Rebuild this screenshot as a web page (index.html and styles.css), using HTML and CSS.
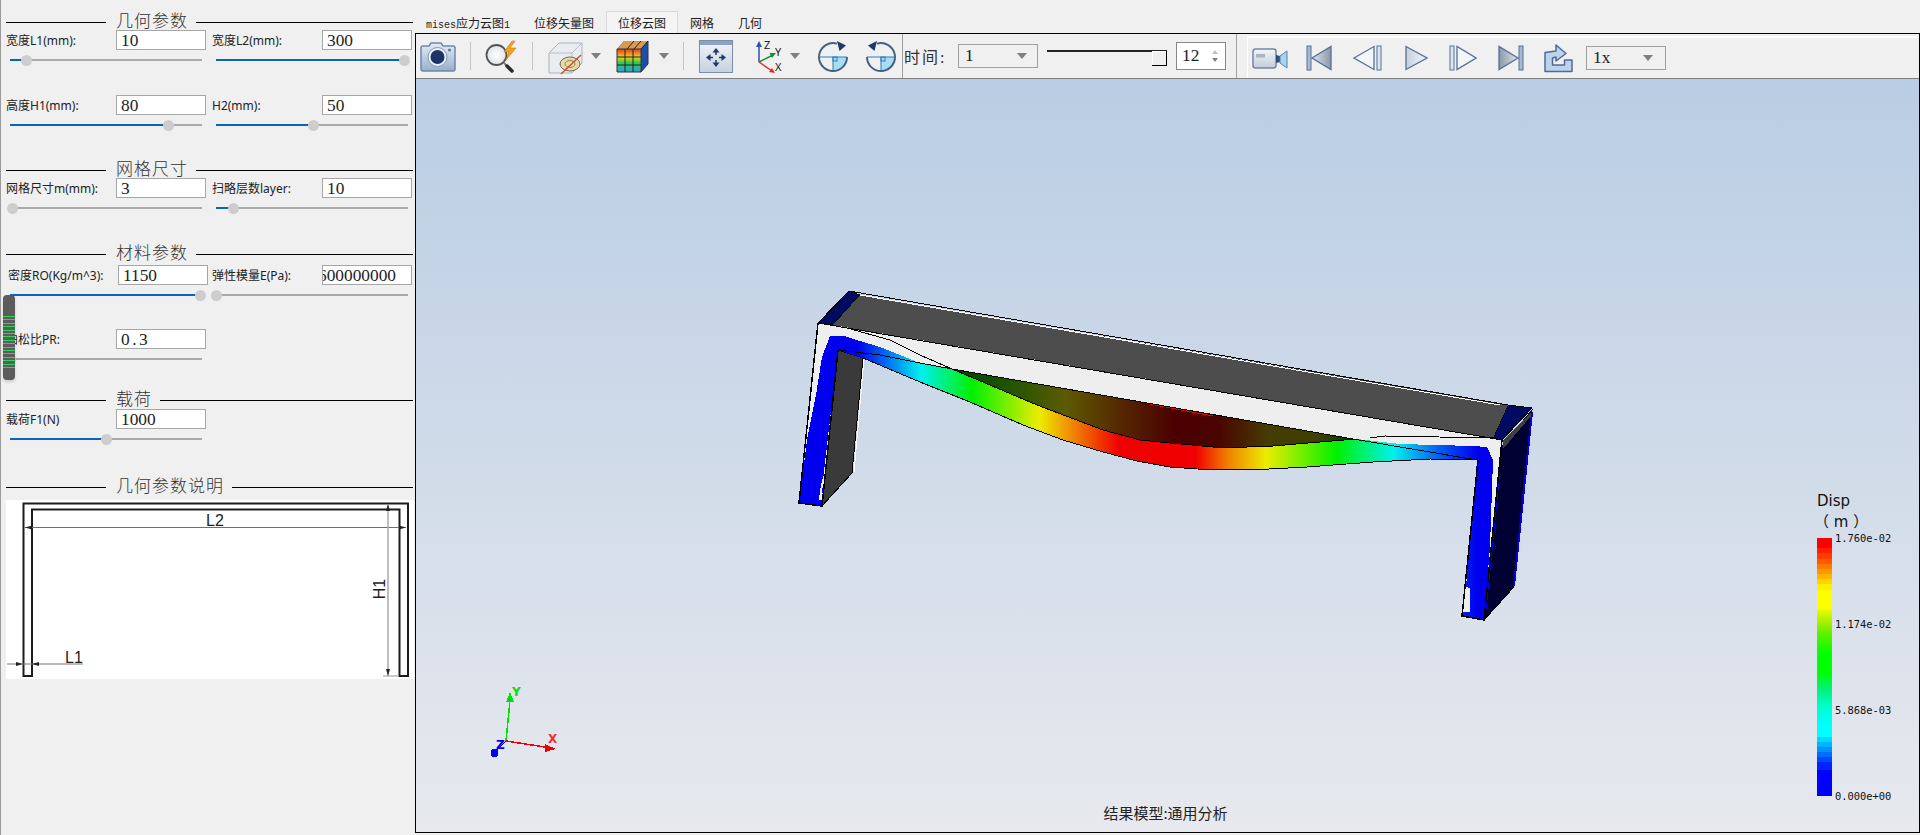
FILE: index.html
```html
<!DOCTYPE html>
<html lang="zh">
<head>
<meta charset="utf-8">
<title>位移云图</title>
<link rel="stylesheet" href="styles.css">
</head>
<body>
<div class="app">
  <aside class="panel">
    <div class="grip"></div>

    <div class="heading"><span class="rule-a"></span><span class="title">几何参数</span><span class="rule-b"></span></div>
    <div class="form gap-25">
      <div class="field"><div class="row"><span class="lbl">宽度L1(mm):</span><div class="val">10</div></div><div class="slider"><div class="fill" style="width:8.8%"></div></div></div>
      <div class="field"><div class="row"><span class="lbl">宽度L2(mm):</span><div class="val">300</div></div><div class="slider"><div class="fill" style="width:98.4%"></div></div></div>
      <div class="field"><div class="row"><span class="lbl">高度H1(mm):</span><div class="val">80</div></div><div class="slider"><div class="fill" style="width:82.5%"></div></div></div>
      <div class="field"><div class="row"><span class="lbl">H2(mm):</span><div class="val">50</div></div><div class="slider"><div class="fill" style="width:51%"></div></div></div>
    </div>

    <div class="heading sec-mesh"><span class="rule-a"></span><span class="title">网格尺寸</span><span class="rule-b"></span></div>
    <div class="form">
      <div class="field"><div class="row"><span class="lbl">网格尺寸m(mm):</span><div class="val">3</div></div><div class="slider"><div class="fill" style="width:1.5%"></div></div></div>
      <div class="field"><div class="row"><span class="lbl">扫略层数layer:</span><div class="val">10</div></div><div class="slider"><div class="fill" style="width:9%"></div></div></div>
    </div>

    <div class="heading sec-mat"><span class="rule-a"></span><span class="title">材料参数</span><span class="rule-b"></span></div>
    <div class="form gap-24">
      <div class="field nudged"><div class="row"><span class="lbl">密度RO(Kg/m^3):</span><div class="val">1150</div></div><div class="slider"><div class="fill" style="width:99%"></div></div></div>
      <div class="field"><div class="row"><span class="lbl">弹性模量E(Pa):</span><div class="val clipped">600000000</div></div><div class="slider"><div class="fill" style="width:0.5%"></div></div></div>
      <div class="field"><div class="row"><span class="lbl">泊松比PR:</span><div class="val spaced">0.3</div></div><div class="slider"><div class="fill" style="width:0"></div></div></div>
    </div>

    <div class="heading sec-load"><span class="rule-a"></span><span class="title">载荷</span><span class="rule-b"></span></div>
    <div class="form">
      <div class="field"><div class="row"><span class="lbl">载荷F1(N)</span><div class="val">1000</div></div><div class="slider"><div class="fill" style="width:50%"></div></div></div>
    </div>

    <div class="heading sec-note"><span class="rule-a"></span><span class="title">几何参数说明</span><span class="rule-b"></span></div>
    <svg class="sketch" viewBox="6 500 408 179" width="408" height="179">
      <rect x="6" y="500" width="408" height="179" fill="#fff"/>
      <path d="M23.5 676V503.5H408V676H399.5V509.5H32V676Z" fill="none" stroke="#1c1c1c" stroke-width="2"/>
      <path d="M25 527.5H406" stroke="#6e6e6e" stroke-width="1"/>
      <path d="M25 527.5l7-2v4zM406 527.5l-7-2v4z" fill="#222"/>
      <path d="M388 504V676" stroke="#a8a8a8" stroke-width="1.5"/>
      <path d="M388 504l-2 7h4zM388 676l-2-7h4z" fill="#222"/>
      <path d="M383 676H399" stroke="#999" stroke-width="1"/>
      <path d="M7 664H83" stroke="#777" stroke-width="1"/>
      <path d="M23 664l-7-2v4zM32 664l7-2v4z" fill="#222"/>
      <text x="215" y="526" class="dim" text-anchor="middle">L2</text>
      <text x="65" y="663" class="dim">L1</text>
      <text class="dim" text-anchor="middle" transform="translate(385 589) rotate(-90)">H1</text>
    </svg>
  </aside>

  <main class="main">
    <nav class="tabs">
      <span class="tab first"><span class="mono">mises</span>应力云图<span class="mono">1</span></span>
      <span class="tab">位移矢量图</span>
      <span class="tab active">位移云图</span>
      <span class="tab">网格</span>
      <span class="tab">几何</span>
    </nav>

    <section class="frame">
      <div class="toolbar">
        <svg class="icon m-4" width="36" height="36" viewBox="0 0 36 36">
          <defs><linearGradient id="cam" x1="0" y1="0" x2="0" y2="1"><stop offset="0" stop-color="#e4ecf5"/><stop offset="1" stop-color="#97afcd"/></linearGradient></defs>
          <path d="M9 8l2-3h10l2 3h10a2 2 0 0 1 2 2v21a2 2 0 0 1-2 2H3a2 2 0 0 1-2-2V10a2 2 0 0 1 2-2z" fill="url(#cam)" stroke="#6f88a8" stroke-width="1.5"/>
          <circle cx="17.5" cy="19" r="9.5" fill="#eaf0f7" stroke="#7f97b6"/>
          <circle cx="17.5" cy="19" r="7" fill="#1c3468"/>
          <circle cx="29.5" cy="12" r="1.5" fill="#5d7597"/>
        </svg>
        <span class="sep-short m-14"></span>
        <svg class="icon m-12" width="38" height="36" viewBox="0 0 38 36">
          <defs><radialGradient id="lens"><stop offset="0" stop-color="#fff"/><stop offset="1" stop-color="#dfe4ea"/></radialGradient></defs>
          <path d="M21 25l3 3" stroke="#777" stroke-width="2"/>
          <path d="M24 28l5 5" stroke="#2b2b2b" stroke-width="3.500" stroke-linecap="round"/>
          <circle cx="13.500" cy="17" r="10" fill="url(#lens)" stroke="#555" stroke-width="1.800"/>
          <path d="M29 3l-8 11h5l-3 8 10-12h-6l5-7z" fill="#f2a21b" stroke="#c97b10" stroke-width=".6"/>
        </svg>
        <span class="sep-short m-11"></span>
        <svg class="icon m-13" width="38" height="36" viewBox="0 0 38 36">
          <path d="M3 15L13 5h23v20L26 35H3z" fill="#e9edf1" stroke="#a9b2bd"/>
          <path d="M3 15h23v20M26 15L36 5" fill="none" stroke="#b8c0ca"/>
          <ellipse cx="24" cy="26" rx="10" ry="7" fill="#e8d9a4" stroke="#6f6a55"/>
          <ellipse cx="24" cy="26" rx="5" ry="3.5" fill="none" stroke="#8f8360"/>
          <path d="M15 36L35 17" stroke="#d4502a" stroke-width="1.5"/>
        </svg>
        <span class="caret m-6"></span>
        <svg class="icon m-13" width="36" height="36" viewBox="0 0 36 36">
          <defs>
            <linearGradient id="rb" x1="0" y1="0" x2="0" y2="1"><stop offset="0" stop-color="#e23a1f"/><stop offset=".35" stop-color="#f0d020"/><stop offset=".6" stop-color="#34c84a"/><stop offset="1" stop-color="#2aa0e8"/></linearGradient>
          </defs>
          <path d="M3 11L10 3h24v23l-7 8H3z" fill="#1d4fa8"/>
          <path d="M3 11L10 3h24l-7 8z" fill="#d99a50"/>
          <rect x="3" y="11" width="24" height="23" fill="url(#rb)"/>
          <path d="M11 11v23M19 11v23M3 19h24M3 27h24M27 11L34 3M13 11l7-8M20 11l7-8" stroke="#222" stroke-width="1" fill="none"/>
          <path d="M3 11h24v23H3zM27 34l7-8V3" fill="none" stroke="#333"/>
        </svg>
        <span class="caret m-8"></span>
        <span class="sep-short m-14"></span>
        <svg class="icon m-14" width="36" height="36" viewBox="0 0 36 36">
          <defs><linearGradient id="win" x1="0" y1="0" x2="0" y2="1"><stop offset="0" stop-color="#f2f5f9"/><stop offset="1" stop-color="#c6d1df"/></linearGradient></defs>
          <rect x="1.5" y="2.5" width="33" height="32" fill="url(#win)" stroke="#7b8da8"/>
          <rect x="2" y="3" width="32" height="4" fill="#8ea3bf"/>
          <g fill="#1f3a68">
            <path d="M18 10l-3.500 4.500h7zM18 29l-3.500-4.500h7zM8 19.500l4.500-3.500v7zM28 19.500l-4.500-3.500v7z"/>
          </g>
          <path d="M18 14v3M18 22v3M12 19.500h3M21 19.500h3" stroke="#1f3a68" stroke-width="1.500"/>
        </svg>
        <svg class="icon m-16" width="36" height="36" viewBox="0 0 36 36">
          <path d="M9 24V7" stroke="#2a55a8" stroke-width="1.500"/><path d="M9 3l-3 6h6z" fill="#2a55a8"/>
          <path d="M9 24l14-7" stroke="#178a3c" stroke-width="1.500"/><path d="M26 15l-6.500 0 2.500 5z" fill="#178a3c"/>
          <path d="M9 24l13 9" stroke="#e02a2a" stroke-width="1.500"/><path d="M25 35l-6-1 3-4z" fill="#e02a2a"/>
          <text x="14" y="11" class="axis">Z</text><text x="25" y="18" class="axis">Y</text><text x="25" y="33" class="axis">X</text>
        </svg>
        <span class="caret m-4"></span>
        <svg class="icon m-15" width="36" height="36" viewBox="0 0 36 36">
          <path d="M18 19h14A14 14 0 0 1 18 33z" fill="#a9dcf5"/>
          <path d="M22 5.600A14 14 0 1 0 32 19" fill="none" stroke="#46607f" stroke-width="2"/>
          <path d="M4 19h28M18 19v14" stroke="#2f7fb8" stroke-width="1"/>
          <path d="M22 3l9 4.500-6.500 5.500z" fill="#1f3a68"/>
          <rect x="18" y="19" width="4" height="4" fill="none" stroke="#2f7fb8"/>
        </svg>
        <svg class="icon m-12" width="36" height="36" viewBox="0 0 36 36">
          <path d="M18 19v14A14 14 0 0 0 32 19z" fill="#a9dcf5"/>
          <path d="M14 5.600A14 14 0 1 1 4 19" fill="none" stroke="#46607f" stroke-width="2"/>
          <path d="M4 19h28M18 19v14" stroke="#2f7fb8" stroke-width="1"/>
          <path d="M14 3L5 7.500l6.500 5.500z" fill="#1f3a68"/>
          <rect x="18" y="19" width="4" height="4" fill="none" stroke="#2f7fb8"/>
        </svg>
        <span class="sep-full m-3"></span>
        <span class="time-lbl">时间:</span>
        <div class="combo combo-time"><span>1</span><span class="caret"></span></div>
        <div class="time-slider"><span class="time-handle"></span></div>
        <div class="spin"><span>12</span><span class="spin-btns"><i class="up"></i><i class="down"></i></span></div>
        <span class="sep-full m-10"></span>
        <div class="player">
          <svg width="36" height="24" viewBox="0 0 36 24">
            <defs><linearGradient id="vid" x1="0" y1="0" x2="0" y2="1"><stop offset="0" stop-color="#f4f6f9"/><stop offset="1" stop-color="#c3ccd8"/></linearGradient></defs>
            <rect x="1" y="3" width="23" height="19" rx="2.500" fill="url(#vid)" stroke="#6f88a8" stroke-width="1.500"/>
            <rect x="4" y="8" width="9" height="3.500" fill="#a9b4c2"/>
            <path d="M24 9l4 1v6l-4 1z" fill="#2f4e7c"/>
            <path d="M28 10l7-5v17l-7-5z" fill="#a7d4ee" stroke="#5f7fa6"/>
          </svg>
          <svg class="m-18" width="26" height="26" viewBox="0 0 26 26">
            <defs><linearGradient id="dk" x1="0" y1="0" x2="1" y2="0"><stop offset="0" stop-color="#dfe4ea"/><stop offset="1" stop-color="#8b97a8"/></linearGradient></defs>
            <rect x="1" y="1" width="4" height="24" fill="#a8bad0" stroke="#54709a"/>
            <path d="M25 1.500V24.500L6 13z" fill="url(#dk)" stroke="#54709a" stroke-width="1.300"/>
          </svg>
          <svg class="m-21" width="29" height="26" viewBox="0 0 29 26">
            <path d="M1 13L21 1.500V24.500z" fill="#f3f5f8" stroke="#54709a" stroke-width="1.300"/>
            <rect x="24" y="1" width="4" height="24" fill="#dde5ef" stroke="#54709a"/>
          </svg>
          <svg class="m-22" width="24" height="26" viewBox="0 0 24 26">
            <defs><linearGradient id="lt" x1="0" y1="0" x2="1" y2="0"><stop offset="0" stop-color="#c4d0df"/><stop offset="1" stop-color="#f5f7fa"/></linearGradient></defs>
            <path d="M2 1.500V24.500L23 13z" fill="url(#lt)" stroke="#54709a" stroke-width="1.300"/>
          </svg>
          <svg class="m-21" width="28" height="26" viewBox="0 0 28 26">
            <rect x="1" y="1" width="4" height="24" fill="#dde5ef" stroke="#54709a"/>
            <path d="M8 1.500V24.500L27 13z" fill="#f3f5f8" stroke="#54709a" stroke-width="1.300"/>
          </svg>
          <svg class="m-21" width="26" height="26" viewBox="0 0 26 26">
            <defs><linearGradient id="dk2" x1="0" y1="0" x2="1" y2="0"><stop offset="0" stop-color="#8b97a8"/><stop offset="1" stop-color="#dfe4ea"/></linearGradient></defs>
            <path d="M1 1.500V24.500L20 13z" fill="url(#dk2)" stroke="#54709a" stroke-width="1.300"/>
            <rect x="21" y="1" width="4" height="24" fill="#a8bad0" stroke="#54709a"/>
          </svg>
          <svg class="m-20" width="29" height="29" viewBox="0 0 29 29">
            <path d="M1 8.500L12 7V1l10 8.500L12 17v-4l-3.500 1v7h12v-5H28v11.500H1z" fill="#bcd3ec" stroke="#4d6c96" stroke-width="1.500" stroke-linejoin="round"/>
          </svg>
          <div class="combo combo-speed"><span>1x</span><span class="caret"></span></div>
        </div>
      </div>

      <div class="viewport">
        <svg class="scene" viewBox="416 79 1503 753" preserveAspectRatio="none">
          <defs>
            <linearGradient id="disp" gradientUnits="userSpaceOnUse" x1="838" y1="0" x2="1477" y2="0">
              <stop offset="0" stop-color="#0000ee"/>
              <stop offset=".03" stop-color="#0000ee"/>
              <stop offset=".07" stop-color="#0060f0"/>
              <stop offset=".13" stop-color="#00f0f0"/>
              <stop offset=".21" stop-color="#00f000"/>
              <stop offset=".315" stop-color="#ecec00"/>
              <stop offset=".37" stop-color="#f08000"/>
              <stop offset=".44" stop-color="#f00000"/>
              <stop offset=".56" stop-color="#f00000"/>
              <stop offset=".61" stop-color="#f08000"/>
              <stop offset=".67" stop-color="#ecec00"/>
              <stop offset=".78" stop-color="#00f000"/>
              <stop offset=".87" stop-color="#00f0f0"/>
              <stop offset=".94" stop-color="#0060f0"/>
              <stop offset="1" stop-color="#0000ee"/>
            </linearGradient>
            <linearGradient id="under" gradientUnits="userSpaceOnUse" x1="952" y1="0" x2="1357" y2="0">
              <stop offset="0" stop-color="#003f00"/>
              <stop offset=".13" stop-color="#1c5400"/>
              <stop offset=".28" stop-color="#5c5a00"/>
              <stop offset=".42" stop-color="#552600"/>
              <stop offset=".55" stop-color="#4a0000"/>
              <stop offset=".66" stop-color="#4a0500"/>
              <stop offset=".78" stop-color="#453c00"/>
              <stop offset=".9" stop-color="#3e4000"/>
              <stop offset="1" stop-color="#003a00"/>
            </linearGradient>
          </defs>
          <g shape-rendering="crispEdges">
            <polygon points="838,350 863,358 852,473 822,506" fill="#3a3a3a" stroke="#000"/>
            <path d="M864 359L854 472" stroke="#fff"/>
            <polygon points="1502,446 1532,410 1513,588 1484,620" fill="#000033" stroke="#000"/>
            <path d="M1532 412L1514 586" stroke="#0000dd" stroke-width="2"/>
            <path d="M1500 470L1486 610" stroke="#0000dd"/>
            <polygon points="1493,438 1508,405 1532,408 1502,440" fill="#000a60" stroke="#000"/>
            <polygon points="1503,441 1531,412 1531,416 1503,449" fill="#404040"/>
            <polygon points="849,291 860,295 833,325 818,323" fill="#000a60" stroke="#000"/>
            <polygon points="860,295 1508,405 1493,438 833,325" fill="#4d4d4d"/>
            <path d="M849 291L1508 405" stroke="#000" fill="none"/>
            <path d="M860 295L1500 405" stroke="#fff" fill="none"/>

            <polygon points="818,323 1502,440 1478,460 1140,402 952,369 838,350 822,506 799,503" fill="#eeeeee"/>
            <polygon points="1502,440 1478,460 1462,616 1484,620" fill="#eeeeee"/>

            <polygon points="830,336 844,336 850,338 880,347 920,363 952,369 1037,405 1103,430 1140,440 1170,443 1213,447 1247,447 1273,446 1320,442 1357,439 1400,444 1473,446 1487,447 1493,460 1490,547 1484,620 1462,616 1466,587 1477,460 1430,459 1373,462 1307,467 1250,470 1197,469 1170,467 1137,461 1103,452 1063,440 1023,425 970,402 920,382 863,358 838,350 823,480 822,506 799,503 807,440 816,395 822,357" fill="url(#disp)"/>
            <polygon points="823,477 822,500 819,500 820,490" fill="#eeeeee"/>
            <polygon points="1466,587 1470,588 1470,612 1463,612" fill="#eeeeee"/>

            <polygon points="952,369 1170,407 1353,439 1320,442 1273,446 1247,447 1213,447 1170,443 1140,440 1103,430 1037,405" fill="url(#under)"/>
            <path d="M1150 404L1213 416" stroke="#f00000"/>

            <path d="M818 323L1502 440" stroke="#000"/>
            <path d="M952 369L1037 405L1103 430L1140 440L1170 443L1213 447L1247 447L1273 446L1320 442L1357 439" fill="none" stroke="#000"/>
            <path d="M952 369L1170 407L1353 439" fill="none" stroke="#000"/>
            <path d="M863 358L920 382L970 402L1023 425L1063 440L1103 452L1137 461L1170 467L1197 469L1250 470L1307 467L1373 462L1430 459L1477 460" fill="none" stroke="#000"/>
            <path d="M838 350L880 355L920 363L952 369" fill="none" stroke="#000"/>
            <path d="M847 328L890 340L920 355L952 369" fill="none" stroke="#000"/>
            <path d="M1353 439L1477 460" fill="none" stroke="#000"/>
            <path d="M1370 438L1385 436L1493 438" fill="none" stroke="#000"/>
            <path d="M838 350L822 506L799 503L818 323" fill="none" stroke="#000" stroke-width="1.500"/>
            <path d="M1478 460L1462 616L1484 620L1502 440" fill="none" stroke="#000" stroke-width="1.500"/>

            <path d="M506 741L510 700" stroke="#00e000" stroke-width="1.500" fill="none"/>
            <polygon points="510,692 506,702 514,702" fill="#00e000"/>
            <path d="M506 741L545 747" stroke="#f00000" stroke-width="1.500" fill="none"/>
            <polygon points="556,749 545,744 545,752" fill="#f00000"/>
            <path d="M506 741L494 753" stroke="#0000f0" stroke-width="1" fill="none"/>
            <circle cx="494.500" cy="753" r="4" fill="#0000f0"/>
          </g>
          <text x="512" y="696" class="t-y">Y</text>
          <text x="548" y="743" class="t-x">X</text>
          <text x="496" y="749" class="t-z">Z</text>
        </svg>

        <div class="legend">
          <div class="legend-title">Disp</div>
          <div class="legend-unit">（ m ）</div>
          <div class="legend-body">
            <div class="legend-bar"></div>
            <div class="legend-ticks"><span>1.760e-02</span><span>1.174e-02</span><span>5.868e-03</span><span>0.000e+00</span></div>
          </div>
        </div>
        <div class="status">结果模型:通用分析</div>
      </div>
    </section>
  </main>
</div>
</body>
</html>
```

FILE: styles.css
```css
* { box-sizing: border-box; }
html, body { margin: 0; height: 100%; overflow: hidden; }
body {
  background: #f0f0f0;
  color: #222;
  font-family: "Noto Sans", "Noto Sans CJK SC", sans-serif;
  font-size: 12px;
}
.app { display: flex; height: 835px; }

/* left panel */
.panel {
  position: relative;
  flex: none;
  width: 415px;
  padding: 14px 0 0 5px;
  border-left: 1px solid #9a9a9a;
}
.grip {
  position: absolute;
  left: 2px;
  top: 295px;
  width: 12px;
  height: 85px;
  border-radius: 4px;
  background:
    repeating-linear-gradient(180deg, #2fd45a 0 1px, #5c5c5c 1px 3.4px) 0 21px / 100% 54px no-repeat,
    #5c5c5c;
  box-shadow: 0 2px 3px rgba(0, 0, 0, .15);
  z-index: 2;
}
.heading { display: flex; align-items: center; height: 16px; }
.rule-a { flex: none; width: 100px; height: 1px; background: #000; }
.rule-b { flex: none; flex-grow: 1; height: 1px; background: #000; margin-right: 2px; }
.title {
  flex: none;
  margin: 0 8px 0 10px;
  font: 300 17px/16px "Liberation Serif", "Noto Sans CJK SC", serif;
  letter-spacing: 1px;
  color: #333;
}
.sec-mesh { margin-top: 27px; }
.sec-mat { margin-top: 28px; margin-bottom: 3px; }
.sec-load { margin-top: 23px; margin-bottom: 1px; }
.sec-note { margin-top: 30px; margin-bottom: 5px; }

.form { display: grid; grid-template-columns: 200px 200px; column-gap: 6px; }
.gap-25 { row-gap: 25px; }
.gap-24 { row-gap: 24px; }
.field { height: 40px; }
.row { display: flex; align-items: center; height: 20px; }
.nudged .row { padding-left: 2px; margin-right: -2px; }
.lbl { flex: 1; white-space: nowrap; font-size: 12px; color: #222; }
.val {
  flex: none;
  width: 90px;
  height: 20px;
  padding: 0 4px;
  overflow: hidden;
  white-space: nowrap;
  background: #fff;
  border: 1px solid #a6a6a6;
  font: 13pt/19px "Liberation Serif", "Noto Serif", serif;
  color: #222;
}
.clipped { text-indent: -9px; }
.spaced { letter-spacing: 2.5px; }

.slider { margin: 9px 4px 0; height: 2px; background: #aaa; }
.fill { position: relative; height: 2px; background: #0a64b8; }
.fill::after {
  content: "";
  position: absolute;
  right: -5.5px;
  top: -4.5px;
  width: 11px;
  height: 11px;
  border-radius: 50%;
  background: #cdcdcd;
}
.sketch { display: block; }
.dim { font: 16px "Liberation Sans", sans-serif; fill: #222; }

/* right side */
.main { flex: 1; display: flex; flex-direction: column; min-width: 0; padding-bottom: 2px; }
.tabs { flex: none; display: flex; height: 33px; padding-top: 11px; }
.tab {
  height: 22px;
  padding: 0 12px;
  font: 12px/24px "Noto Sans CJK SC", sans-serif;
  color: #222;
  white-space: nowrap;
}
.tab.first { padding-left: 11px; }
.tab.active {
  background: #f4f4f4;
  border: 1px solid #d9d9d9;
  border-bottom: 0;
  padding: 0 11px;
  line-height: 22px;
}
.mono { font-family: "Liberation Mono", monospace; font-size: 10px; }

.frame {
  flex: 1;
  display: flex;
  flex-direction: column;
  min-height: 0;
  border: 1px solid #000;
}
.toolbar {
  flex: none;
  display: flex;
  align-items: center;
  height: 45px;
  border-bottom: 1px solid #808080;
  background: #f0f0f0;
}
.icon { flex: none; display: block; overflow: visible; }
.sep-short { flex: none; width: 1px; height: 28px; background: #c4c4c4; }
.sep-full { flex: none; width: 1px; align-self: stretch; background: #a0a0a0; }
.caret {
  flex: none;
  width: 0;
  height: 0;
  border-left: 5px solid transparent;
  border-right: 5px solid transparent;
  border-top: 6px solid #808080;
}
.m-3 { margin-left: 3px; }
.m-4 { margin-left: 4px; }
.m-6 { margin-left: 7px; }
.m-8 { margin-left: 9px; }
.m-10 { margin-left: 10px; }
.m-11 { margin-left: 11px; }
.m-12 { margin-left: 12px; }
.m-13 { margin-left: 13px; }
.m-14 { margin-left: 14px; }
.m-15 { margin-left: 15px; }
.m-16 { margin-left: 16px; }
.m-18 { margin-left: 18px; }
.m-20 { margin-left: 20px; }
.m-21 { margin-left: 21px; }
.m-22 { margin-left: 22px; }

.time-lbl {
  flex: none;
  width: 55px;
  padding-left: 1px;
  font: 16px "Liberation Serif", "Noto Sans CJK SC", serif;
  letter-spacing: 2px;
  color: #333;
}
.combo {
  flex: none;
  display: flex;
  align-items: center;
  justify-content: space-between;
  height: 24px;
  padding: 0 10px 0 6px;
  border: 1px solid #a0a0a0;
  font: 13pt "Liberation Serif", serif;
  color: #222;
}
.combo-time { width: 80px; }
.combo-speed { width: 80px; margin-left: 13px; padding-right: 12px; }
.time-slider {
  position: relative;
  flex: none;
  align-self: flex-start;
  width: 120px;
  height: 16px;
  margin: 16px 0 0 9px;
  border-top: 2px solid #222;
}
.time-handle {
  position: absolute;
  right: 0;
  top: -1px;
  width: 15px;
  height: 15px;
  background: #f0f0f0;
  border-right: 1px solid #000;
  border-bottom: 1px solid #000;
  box-shadow: inset 1px 1px 0 #fff;
}
.spin {
  flex: none;
  display: flex;
  align-items: center;
  justify-content: space-between;
  width: 50px;
  height: 28px;
  margin-left: 9px;
  padding: 0 7px 0 5px;
  background: #fff;
  border: 1px solid #888;
  font: 13pt "Liberation Serif", serif;
  color: #222;
}
.spin-btns { display: flex; flex-direction: column; gap: 4px; }
.spin-btns i { display: block; width: 0; height: 0; border-left: 3.5px solid transparent; border-right: 3.5px solid transparent; }
.spin-btns .up { border-bottom: 4px solid #c0c0c0; }
.spin-btns .down { border-top: 4px solid #808080; }
.player {
  flex: 1;
  align-self: stretch;
  display: flex;
  align-items: center;
  margin: 2px 0 0 10px;
  padding-left: 4px;
  border-top: 2px solid #fff;
  border-left: 1px solid #fff;
}
.player svg { flex: none; display: block; }

.viewport {
  position: relative;
  flex: 1;
  min-height: 0;
  background: linear-gradient(180deg, #b9cde4 0%, #e7e9ee 100%);
  overflow: hidden;
}
.scene { position: absolute; inset: 0; width: 100%; height: 100%; }
.axis { font: 11px "Noto Sans", sans-serif; fill: #222; }
.t-y, .t-x, .t-z { font: bold 12px "DejaVu Sans", sans-serif; }
.t-y { fill: #00e000; }
.t-x { fill: #f03030; }
.t-z { fill: #0000f0; }

.legend {
  position: absolute;
  left: 1401px;
  top: 415px;
  width: 90px;
  color: #111;
}
.legend-title { font: 15px/15px "DejaVu Sans", sans-serif; }
.legend-unit { margin-left: -3px; font: 15px/17px "DejaVu Sans", "Noto Sans CJK SC", sans-serif; margin-top: 5px; }
.legend-body { display: flex; margin-top: 7px; height: 258px; }
.legend-bar {
  flex: none;
  width: 15px;
  background: linear-gradient(180deg,
    #ff0000 0 4%, #ff2000 4% 6%, #ff3c00 6% 8%, #ff5a00 8% 10%, #ff7800 10% 12%, #ff9600 12% 14%,
    #ffb400 14% 16%, #ffd200 16% 18%, #fff000 18% 20%, #ffff00 20% 27%,
    #d8f800 29%, #a0f000 33%, #60f000 37%, #00ff00 45%, #00ff00 52%,
    #00f080 59%, #00ffc8 65%, #00ffff 72%, #00ffff 77%,
    #00d8ff 77% 79%, #00b4ff 79% 81%, #0090ff 81% 83%, #006cff 83% 85%, #0048ff 85% 87%,
    #0024ff 87% 90%, #0000ff 90% 100%);
}
.legend-ticks {
  position: relative;
  display: flex;
  flex-direction: column;
  justify-content: space-between;
  margin: -8px 0 -8px 3px;
  font: 10.4px/16px "DejaVu Sans Mono", monospace;
  color: #111;
  white-space: nowrap;
}
.status {
  position: absolute;
  left: 0;
  right: 0;
  bottom: 9px;
  text-align: center;
  font: 15px/20px "Noto Sans CJK SC", sans-serif;
  color: #222;
  transform: translateX(-2px);
}
```
